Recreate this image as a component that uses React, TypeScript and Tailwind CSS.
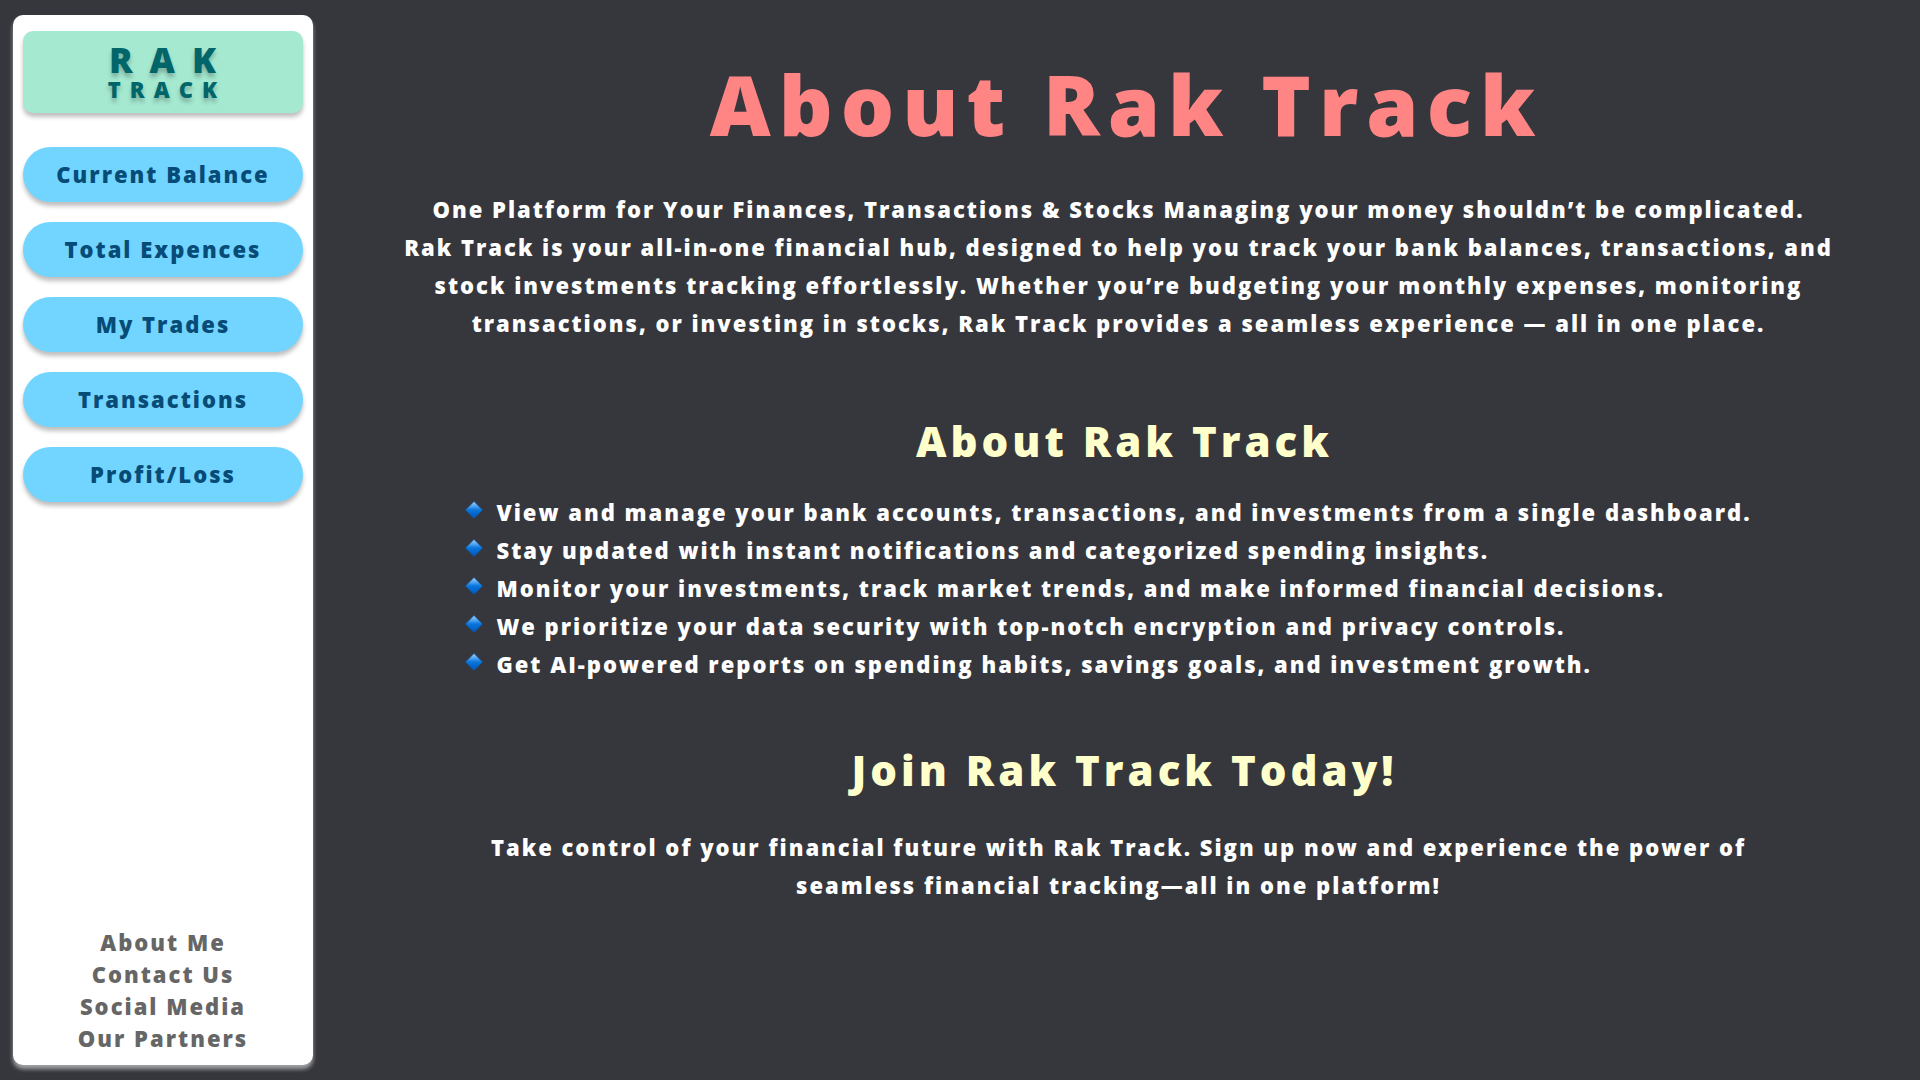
const navItems = ['Current Balance', 'Total Expences', 'My Trades', 'Transactions', 'Profit/Loss'];

const footerLinks = ['About Me', 'Contact Us', 'Social Media', 'Our Partners'];

const features = [
  'View and manage your bank accounts, transactions, and investments from a single dashboard.',
  'Stay updated with instant notifications and categorized spending insights.',
  'Monitor your investments, track market trends, and make informed financial decisions.',
  'We prioritize your data security with top-notch encryption and privacy controls.',
  'Get AI-powered reports on spending habits, savings goals, and investment growth.',
];

function Diamond() {
  return (
    <svg viewBox="0 0 18 18" className="mb-1 size-[18px] shrink-0" aria-hidden="true">
      <defs>
        <linearGradient id="gem" x1="0" y1="0" x2="0" y2="1">
          <stop offset="0" stopColor="#a5d5fb" />
          <stop offset="0.3" stopColor="#4a9eee" />
          <stop offset="0.5" stopColor="#0875de" />
          <stop offset="1" stopColor="#0057b8" />
        </linearGradient>
      </defs>
      <path d="M9 0.5 17.5 9 9 17.5 0.5 9Z" fill="url(#gem)" stroke="#0a57ad" strokeWidth="0.6" />
    </svg>
  );
}

function Sidebar() {
  return (
    <aside className="flex w-[300px] shrink-0 flex-col rounded-[10px] bg-white px-[10px] pt-4 pb-[11px] shadow-[0_4px_4px_rgba(255,255,255,0.55)]">
      <a
        href="#home"
        className="flex h-[82px] flex-col items-center rounded-[10px] bg-[#a5e9d1] pt-3 text-[#006669] shadow-[0_4px_4px_rgba(0,0,0,0.25)] [text-shadow:0_4px_4px_rgba(0,0,0,0.25)]"
      >
        <span className="pl-4 text-[35px] leading-[34px] tracking-[17px]">RAK</span>
        <span className="pl-2 text-[22px] leading-6 tracking-[9px]">TRACK</span>
      </a>
      <nav className="mt-[34px] flex flex-col gap-5">
        {navItems.map((item) => (
          <button
            key={item}
            type="button"
            className="h-[55px] rounded-full bg-[#72d5ff] text-[22px] tracking-[2px] text-[#074b77] shadow-[0_4px_4px_rgba(0,0,0,0.25)]"
          >
            {item}
          </button>
        ))}
      </nav>
      <ul className="mt-auto text-center text-[22px] leading-8 tracking-[2px] text-[#666666]">
        {footerLinks.map((link) => (
          <li key={link}>
            <a href={'#' + link.toLowerCase().replace(' ', '-')}>{link}</a>
          </li>
        ))}
      </ul>
    </aside>
  );
}

export default function App() {
  return (
    <div className="flex min-h-screen bg-[#36373d] py-[15px] pl-[13px] font-['Open_Sans',sans-serif] font-extrabold text-white">
      <Sidebar />
      <main className="min-w-0 flex-1 pt-9 pr-5 pl-6 text-center text-[22px] leading-[38px] tracking-[2px]">
        <h1 className="pl-4 text-[84px] leading-[106px] tracking-[8px] text-[#ff8585]">About Rak Track</h1>
        <p className="mt-[33px]">
          One Platform for Your Finances, Transactions &amp; Stocks Managing your money shouldn’t be complicated.
          <br />
          Rak Track is your all-in-one financial hub, designed to help you track your bank balances, transactions, and
          <br />
          stock investments tracking effortlessly. Whether you’re budgeting your monthly expenses, monitoring
          <br />
          transactions, or investing in stocks, Rak Track provides a seamless experience — all in one place.
        </p>
        <h2 className="mt-[71px] pl-3 text-[42px] leading-[56px] tracking-[4px] text-[#ffffcc]">About Rak Track</h2>
        <ul className="mx-auto mt-6 w-fit pr-5 text-left">
          {features.map((feature) => (
            <li key={feature} className="flex items-center gap-[13px]">
              <Diamond />
              <span>{feature}</span>
            </li>
          ))}
        </ul>
        <h2 className="mt-[59px] pl-3 text-[42px] leading-[56px] tracking-[4px] text-[#ffffcc]">
          Join Rak Track Today!
        </h2>
        <p className="mt-[30px]">
          Take control of your financial future with Rak Track. Sign up now and experience the power of
          <br />
          seamless financial tracking—all in one platform!
        </p>
      </main>
    </div>
  );
}
